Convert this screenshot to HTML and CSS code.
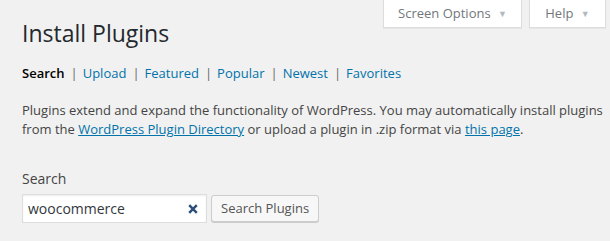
FILE: index.html
```html
<!DOCTYPE html>
<html lang="en">
<head>
    <meta charset="UTF-8">
    <title>Install Plugins</title>
    <link rel="stylesheet" href="styles.css">
</head>
<body>

<div class="screen-meta-links">
    <button class="meta-tab tab-options">Screen Options <span class="arrow">&#9660;</span></button>
    <button class="meta-tab tab-help">Help <span class="arrow">&#9660;</span></button>
</div>

<div class="wrap">
    <h1>Install Plugins</h1>

    <ul class="subsubsub">
        <li><a href="#" class="current">Search</a><span class="sep">|</span></li>
        <li><a href="#">Upload</a><span class="sep">|</span></li>
        <li><a href="#">Featured</a><span class="sep">|</span></li>
        <li><a href="#">Popular</a><span class="sep">|</span></li>
        <li><a href="#">Newest</a><span class="sep">|</span></li>
        <li><a href="#">Favorites</a></li>
    </ul>

    <p class="intro">Plugins extend and expand the functionality of WordPress. You may automatically install plugins from the <a href="#">WordPress Plugin Directory</a> or upload a plugin in .zip format via <a href="#">this page</a>.</p>

    <form class="search-form">
        <label for="s" class="search-label">Search</label>
        <div class="search-row">
            <div class="search-box">
                <input type="text" id="s" value="woocommerce">
                <span class="clear">
                    <svg width="10" height="10" viewBox="0 0 10 10"><path d="M1.2 1.2 L8.8 8.8 M8.8 1.2 L1.2 8.8" stroke="#2c4f7c" stroke-width="2.5"/></svg>
                </span>
            </div>
            <button type="submit" class="button">Search Plugins</button>
        </div>
    </form>
</div>

</body>
</html>
```

FILE: styles.css
```css
body {
    font-family: "Open Sans", sans-serif;
    font-size: 13px;
    color: #444;
    background-color: #f1f1f1;
    margin: 0;
    padding: 0;
}
a {
    color: #0073aa;
}
.screen-meta-links {
    float: right;
    display: flex;
    gap: 7px;
    margin-right: 4px;
}
.meta-tab {
    font-family: "Open Sans", sans-serif;
    font-size: 13px;
    color: #72777c;
    background: #fff;
    border: 1px solid #ddd;
    border-top: none;
    box-shadow: 0 1px 1px rgba(0, 0, 0, 0.04);
    height: 28px;
    padding: 0;
    line-height: 26px;
    text-align: center;
}
.tab-options {
    width: 139px;
}
.tab-help {
    width: 77px;
}
.meta-tab .arrow {
    font-size: 9px;
    color: #b4b9be;
    margin-left: 4px;
    vertical-align: 1px;
}
.wrap {
    padding: 0 0 0 22px;
}
h1 {
    font-size: 23px;
    font-weight: 400;
    color: #23282d;
    margin: 0;
    padding: 19px 0 4px;
    line-height: 29px;
}
.subsubsub {
    list-style: none;
    margin: 8px 0 0;
    padding: 0;
    display: flex;
    line-height: 2;
    font-size: 13px;
}
.subsubsub a {
    text-decoration: none;
}
.subsubsub a.current {
    color: #000;
    font-weight: 600;
}
.subsubsub .sep {
    margin: 0 5px 0 6px;
    color: #666;
}
.intro {
    margin: 15px 0 0;
    line-height: 19px;
}
.search-form {
    margin-top: 30px;
}
.search-label {
    display: block;
    font-size: 14px;
    color: #444;
    margin-bottom: 6px;
}
.search-row {
    display: flex;
    gap: 4px;
    align-items: flex-start;
}
.search-box {
    position: relative;
    width: 185px;
}
.search-box input {
    box-sizing: border-box;
    width: 100%;
    height: 29px;
    font-family: "Open Sans", sans-serif;
    font-size: 14px;
    color: #32373c;
    border: 1px solid #ddd;
    box-shadow: inset 0 1px 2px rgba(0, 0, 0, 0.07);
    padding: 0 26px 0 5px;
    background: #fff;
    outline: none;
}
.search-box .clear {
    position: absolute;
    right: 9px;
    top: 10px;
    line-height: 0;
}
.button {
    font-family: "Open Sans", sans-serif;
    font-size: 13px;
    color: #555;
    background: #f7f7f7;
    border: 1px solid #ccc;
    border-radius: 3px;
    box-shadow: 0 1px 0 #ccc;
    height: 27px;
    margin-top: 1px;
    padding: 0 9px 1px;
    line-height: 24px;
    cursor: pointer;
}
```
